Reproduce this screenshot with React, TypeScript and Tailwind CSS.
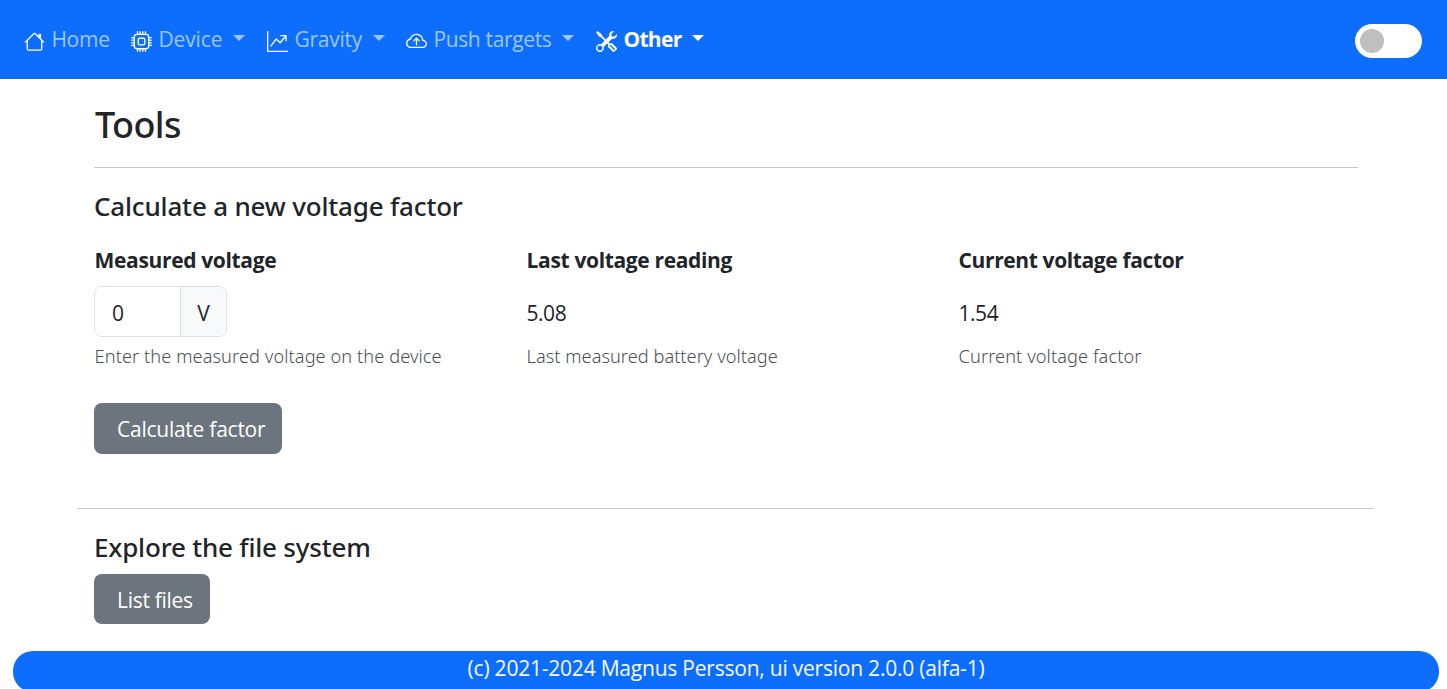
import React, { useState } from "react";
import { BsHouse, BsCpu, BsGraphUpArrow, BsCloudArrowUp, BsTools } from "react-icons/bs";
import type { IconType } from "react-icons";

type NavItem = {
  label: string;
  icon: IconType;
  width: string;
  labelClass: string;
  caret: boolean;
  active?: boolean;
};

const navItems: NavItem[] = [
  { label: "Home", icon: BsHouse, width: "w-[107px]", labelClass: "tracking-[-0.25px]", caret: false },
  { label: "Device", icon: BsCpu, width: "w-[136px]", labelClass: "tracking-[-0.1px]", caret: true },
  { label: "Gravity", icon: BsGraphUpArrow, width: "w-[139px]", labelClass: "tracking-[-0.25px]", caret: true },
  { label: "Push targets", icon: BsCloudArrowUp, width: "w-[190px]", labelClass: "tracking-[-0.35px]", caret: true },
  { label: "Other", icon: BsTools, width: "w-[110px]", labelClass: "tracking-[-0.7px]", caret: true, active: true },
];

function NavLink({ label, icon: Icon, width, labelClass, caret, active }: NavItem) {
  return (
    <a href="#" className={`flex shrink-0 items-center whitespace-nowrap ${width} ${active ? "font-bold text-white" : "text-[#9ec5ff]"}`}>
      <Icon className="mt-[4px] h-[21px] w-[21px] shrink-0 text-white" />
      <span className={`ml-[6.4px] ${labelClass}`}>{label}</span>
      {caret && (
        <svg className="mb-[2px] ml-[11px] h-[6px] w-3 shrink-0" viewBox="0 0 12 6" fill="currentColor">
          <path d="M0 0h12L6 6z" />
        </svg>
      )}
    </a>
  );
}

function ThemeToggle() {
  const [on, setOn] = useState(false);
  return (
    <button
      aria-label="Toggle theme"
      onClick={() => setOn(!on)}
      className={`mt-[3px] flex h-[34px] w-[67px] items-center rounded-full bg-white px-[5px] ${on ? "justify-end" : "justify-start"}`}
    >
      <span className="h-6 w-6 rounded-full bg-[#bfbfbf]" />
    </button>
  );
}

function Help({ children }: { children: React.ReactNode }) {
  return <div className="mt-[5px] pl-[0.6px] font-['Noto_Sans',sans-serif] text-[18.2px] leading-[28px] font-light text-[#4a4f55]">{children}</div>;
}

export default function App() {
  const [voltage, setVoltage] = useState("0");
  return (
    <div className="flex h-[689px] w-[1447px] flex-col overflow-hidden bg-white font-['Open_Sans','Noto_Sans',sans-serif] text-[21px] leading-[32px] text-[#212529]">
      <nav className="flex h-[79px] shrink-0 items-center justify-between bg-[#0d6efd] pr-[25px] pl-6">
        <div className="flex pb-px">
          {navItems.map((item) => (
            <NavLink key={item.label} {...item} />
          ))}
        </div>
        <ThemeToggle />
      </nav>

      <main className="flex h-[572px] shrink-0 flex-col pr-[89px] pl-[94px]">
        <h1 className="mt-[22px] pl-px font-['Noto_Sans',sans-serif] text-[36px] leading-[48px] font-medium tracking-[-0.61px]">Tools</h1>
        <hr className="mt-[18px] w-[1264px] border-[#c8c9ca]" />
        <h2 className="mt-[22px] font-['Noto_Sans',sans-serif] text-[26px] leading-[32px] font-medium tracking-[-0.18px]">
          Calculate a new voltage factor
        </h2>

        <div className="mt-[22px] grid h-[126px] w-[1296px] grid-cols-3">
          <div>
            <label className="block pl-[0.6px] font-bold tracking-[-0.35px]">Measured voltage</label>
            <div className="mt-[10px] flex h-[51px] w-[133px] overflow-hidden rounded-lg border border-[#dee2e6]">
              <input
                value={voltage}
                onChange={(e) => setVoltage(e.target.value)}
                className="w-[85px] bg-white pt-[3px] pl-[17px] outline-none"
              />
              <span className="flex flex-1 items-center justify-center border-l border-[#dee2e6] bg-[#f8f9fa] pt-[3px]">V</span>
            </div>
            <Help>
              <span className="tracking-[0.08px]">Enter the measured voltage on the device</span>
            </Help>
          </div>
          <div>
            <div className="pl-[0.6px] font-bold tracking-[-0.35px]">Last voltage reading</div>
            <div className="mt-[10px] flex h-[51px] items-center pt-[3px] pl-[0.6px] tracking-[-0.5px]">5.08</div>
            <Help>
              <span className="tracking-[0.03px]">Last measured battery voltage</span>
            </Help>
          </div>
          <div>
            <div className="pl-[0.6px] font-bold tracking-[-0.38px]">Current voltage factor</div>
            <div className="mt-[10px] flex h-[51px] items-center pt-[3px] pl-[0.6px] tracking-[-0.5px]">1.54</div>
            <Help>
              <span className="tracking-[0.08px]">Current voltage factor</span>
            </Help>
          </div>
        </div>

        <button className="mt-[33px] flex h-[51px] w-[188px] shrink-0 items-center rounded-lg bg-[#6c757d] pt-px pl-[23px] whitespace-nowrap tracking-[-0.25px] text-white">
          Calculate factor
        </button>

        <hr className="mt-[54px] -ml-4 w-[1296px] border-[#c8c9ca]" />

        <h2 className="mt-[22px] font-['Noto_Sans',sans-serif] text-[26px] leading-[32px] font-medium tracking-[-0.2px]">
          Explore the file system
        </h2>
        <button className="mt-[11px] flex h-[50px] w-[116px] shrink-0 items-center rounded-lg bg-[#6c757d] pt-[2px] pl-[23px] whitespace-nowrap tracking-[-0.29px] text-white">
          List files
        </button>
      </main>

      <footer className="mr-[8px] ml-[13px] h-[41px] shrink-0 rounded-[20px] bg-[#0d6efd] pt-px text-center tracking-[-0.22px] text-[#f8f9fa]">
        (c) 2021-2024 Magnus Persson, ui version 2.0.0 (alfa-1)
      </footer>
    </div>
  );
}
